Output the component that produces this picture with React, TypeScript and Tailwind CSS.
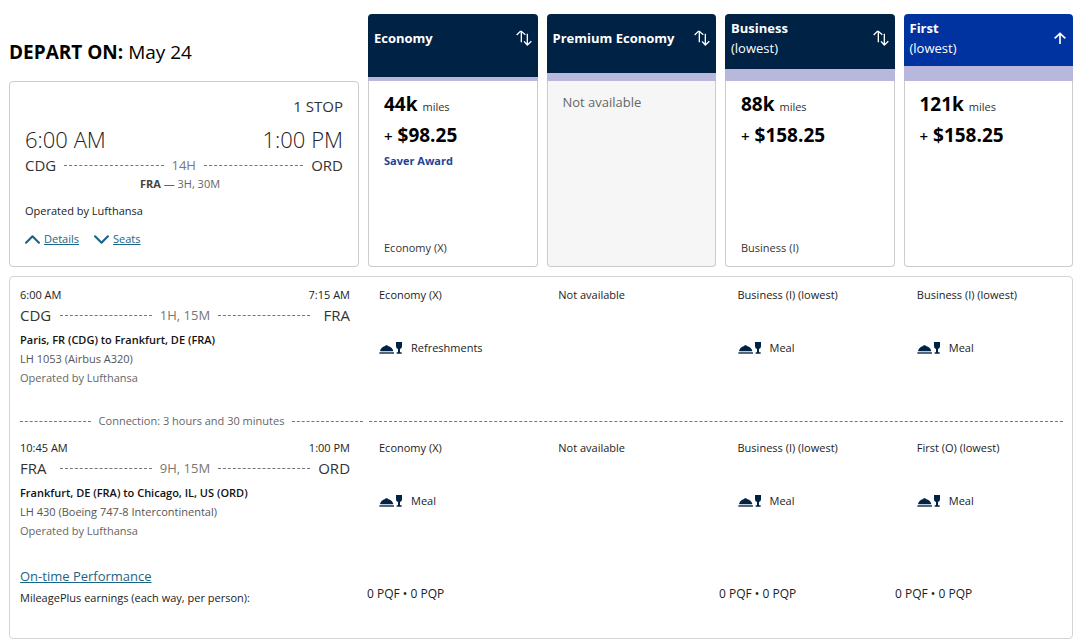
import { ChevronDown, ChevronUp } from 'lucide-react'

type Fare = {
  name: string
  lowest?: boolean
  active?: boolean
  bar: string
  miles?: string
  cash?: string
  award?: string
  booking?: string
}

const FARES: Fare[] = [
  { name: 'Economy', bar: 'h-1', miles: '44k', cash: '$98.25', award: 'Saver Award', booking: 'Economy (X)' },
  { name: 'Premium Economy', bar: 'h-2' },
  { name: 'Business', lowest: true, bar: 'h-3', miles: '88k', cash: '$158.25', booking: 'Business (I)' },
  { name: 'First', lowest: true, active: true, bar: 'h-[15px]', miles: '121k', cash: '$158.25' },
]

const LEGS = [
  {
    depart: '6:00 AM',
    arrive: '7:15 AM',
    from: 'CDG',
    to: 'FRA',
    duration: '1H, 15M',
    route: 'Paris, FR (CDG) to Frankfurt, DE (FRA)',
    aircraft: 'LH 1053 (Airbus A320)',
    cabins: [
      { cabin: 'Economy (X)', meal: 'Refreshments' },
      { cabin: 'Not available' },
      { cabin: 'Business (I) (lowest)', meal: 'Meal' },
      { cabin: 'Business (I) (lowest)', meal: 'Meal' },
    ],
  },
  {
    depart: '10:45 AM',
    arrive: '1:00 PM',
    from: 'FRA',
    to: 'ORD',
    duration: '9H, 15M',
    route: 'Frankfurt, DE (FRA) to Chicago, IL, US (ORD)',
    aircraft: 'LH 430 (Boeing 747-8 Intercontinental)',
    cabins: [
      { cabin: 'Economy (X)', meal: 'Meal' },
      { cabin: 'Not available' },
      { cabin: 'Business (I) (lowest)', meal: 'Meal' },
      { cabin: 'First (O) (lowest)', meal: 'Meal' },
    ],
  },
]

const EARNINGS = ['0 PQF • 0 PQP', '', '0 PQF • 0 PQP', '0 PQF • 0 PQP']

function SortIcon() {
  return (
    <svg className="h-4 w-4 shrink-0" viewBox="0 0 48 48" fill="none" stroke="currentColor" strokeWidth="4">
      <path d="M16 37V4M2 15L13 4h3v0l12 10" />
      <path d="M34 11v34M24 34l10 11 12-11" />
    </svg>
  )
}

function SortedIcon() {
  return (
    <svg className="mr-px h-3 w-3 shrink-0" viewBox="0 0 36 36" fill="none" stroke="currentColor" strokeWidth="5">
      <path d="M18 36V4M2 19L18 4l16 15" />
    </svg>
  )
}

function MealIcon() {
  return (
    <svg className="h-3 w-6 shrink-0" viewBox="0 0 72 36" fill="#002244">
      <path d="M3 27C5 18 13 13 19 12v-2h7v2c7 1 15 6 17 15z" />
      <path d="M4 28h38v3H4z" opacity="0.35" />
      <path d="M1 31h44v4H1z" />
      <path d="M51 0h18v12c0 5-2 8-6 9v10h5v4H53v-4h4V21c-4-1-6-4-6-9z" />
    </svg>
  )
}

function Dashes() {
  return <span className="flex-1 border-t border-dashed border-[#777]" />
}

function FareCard({ fare }: { fare: Fare }) {
  return (
    <div className="flex flex-col">
      <div className={`flex h-[67px] flex-col overflow-hidden rounded-t text-white ${fare.active ? 'bg-[#0033a0]' : 'bg-[#002244]'}`}>
        <button type="button" className="flex h-[47px] w-full items-center justify-between px-[6px] text-left text-[13px] leading-5">
          <span>
            <span className="block font-bold">{fare.name}</span>
            {fare.lowest && <span className="block">(lowest)</span>}
          </span>
          {fare.active ? <SortedIcon /> : <SortIcon />}
        </button>
        <div className={`mt-auto shrink-0 bg-[#b8b8dc] ${fare.bar}`} />
      </div>
      <div
        className={`flex flex-1 flex-col rounded-b border border-t-0 border-[#ccc] px-[15px] pt-[11px] pb-2 ${
          fare.miles ? 'bg-white' : 'bg-[#f6f6f6]'
        }`}
      >
        {fare.miles ? (
          <>
            <p className="text-[19px] leading-6 font-bold text-black">
              {fare.miles} <span className="text-[11px] font-normal text-[#333]">miles</span>
            </p>
            <p className="mt-1 text-[19px] leading-6 font-bold text-black">
              <span className="text-[15px] font-semibold">+</span> {fare.cash}
            </p>
            {fare.award && <p className="mt-[3px] text-[11px] leading-5 font-bold text-[#1c4596]">{fare.award}</p>}
          </>
        ) : (
          <p className="text-[13px] leading-5 text-[#666]">Not available</p>
        )}
        {fare.booking && <p className="mt-auto text-[11px] leading-5 text-[#333]">{fare.booking}</p>}
      </div>
    </div>
  )
}

function Leg({ leg }: { leg: (typeof LEGS)[number] }) {
  return (
    <div className="grid grid-cols-[359px_179fr_179fr_179fr_146fr] text-[11px]">
      <div className="mr-[29px]">
        <div className="flex justify-between leading-5 text-[#222]">
          <span>{leg.depart}</span>
          <span>{leg.arrive}</span>
        </div>
        <div className="flex items-center text-[15px] leading-5 text-[#333]">
          <span className="w-10">{leg.from}</span>
          <Dashes />
          <span className="mx-2 text-[13px] text-[#777]">{leg.duration}</span>
          <Dashes />
          <span className="w-10 text-right">{leg.to}</span>
        </div>
        <div className="mt-[5px] leading-[19px]">
          <p className="font-semibold text-[#111]">{leg.route}</p>
          <p className="text-[#555]">{leg.aircraft}</p>
          <p className="text-[#666]">Operated by Lufthansa</p>
        </div>
      </div>
      {leg.cabins.map((c, i) => (
        <div key={i} className="leading-5 text-[#222]">
          <p>{c.cabin}</p>
          {c.meal && (
            <p className="mt-[33px] flex items-center gap-2">
              <MealIcon />
              {c.meal}
            </p>
          )}
        </div>
      ))}
    </div>
  )
}

export default function App() {
  return (
    <main className="bg-white pt-[14px] pr-[7px] pl-[9px] font-['Open_Sans',sans-serif]">
      <section className="grid grid-cols-[350px_repeat(4,1fr)] gap-[9px]">
        <div className="flex flex-col">
          <h2 className="flex h-[67px] items-center pt-[9px] text-[19px] leading-6 font-bold text-black">
            <span>
              DEPART ON: <span className="font-medium">May 24</span>
            </span>
          </h2>
          <div className="rounded border border-[#ccc] px-[15px] pt-[14px] pb-[17px]">
            <p className="text-right text-[15px] leading-5 text-[#333]">1 STOP</p>
            <div className="mt-[7px] flex justify-between text-[22px] leading-8 font-light text-[#222]">
              <span>6:00 AM</span>
              <span>1:00 PM</span>
            </div>
            <div className="flex items-center text-[15px] leading-5 text-[#333]">
              <span>CDG</span>
              <span className="mx-2 flex flex-1 items-center">
                <Dashes />
                <span className="mx-2 text-[13px] text-[#777]">14H</span>
                <Dashes />
              </span>
              <span>ORD</span>
            </div>
            <p className="mt-px pr-2 text-center text-[11px] leading-4 text-[#666]">
              <b className="text-[#444]">FRA</b> — 3H, 30M
            </p>
            <p className="mt-[9px] text-[11px] leading-5 text-[#222]">Operated by Lufthansa</p>
            <div className="mt-2 flex gap-[15px] text-[11px] leading-5 text-[#1a6585]">
              <a href="#details" className="flex items-center gap-1">
                <ChevronUp size={15} viewBox="5 5 14 14" strokeWidth={2} />
                <span className="underline">Details</span>
              </a>
              <a href="#seats" className="flex items-center gap-1">
                <ChevronDown size={15} viewBox="5 5 14 14" strokeWidth={2} />
                <span className="underline">Seats</span>
              </a>
            </div>
          </div>
        </div>
        {FARES.map(fare => (
          <FareCard key={fare.name} fare={fare} />
        ))}
      </section>

      <section id="details" className="mt-[9px] rounded border border-[#d4d4d4] pt-2 pr-[9px] pb-[30px] pl-[10px]">
        <Leg leg={LEGS[0]} />
        <div className="mt-6 mb-[7px] flex items-center text-[11px] leading-5 text-[#666]">
          <div className="mr-[6px] flex w-[343px] items-center gap-2">
            <Dashes />
            Connection: 3 hours and 30 minutes
            <Dashes />
          </div>
          <Dashes />
        </div>
        <Leg leg={LEGS[1]} />
        <div className="mt-6 grid grid-cols-[347px_176fr_176fr_176fr_168fr] items-end text-[11px] leading-5 text-[#222]">
          <div>
            <a href="#on-time" className="text-[13px] leading-6 text-[#1a6585] underline">
              On-time Performance
            </a>
            <p>MileagePlus earnings (each way, per person):</p>
          </div>
          {EARNINGS.map((e, i) => (
            <p key={i} className="pb-1 text-[12px]">{e}</p>
          ))}
        </div>
      </section>
    </main>
  )
}
